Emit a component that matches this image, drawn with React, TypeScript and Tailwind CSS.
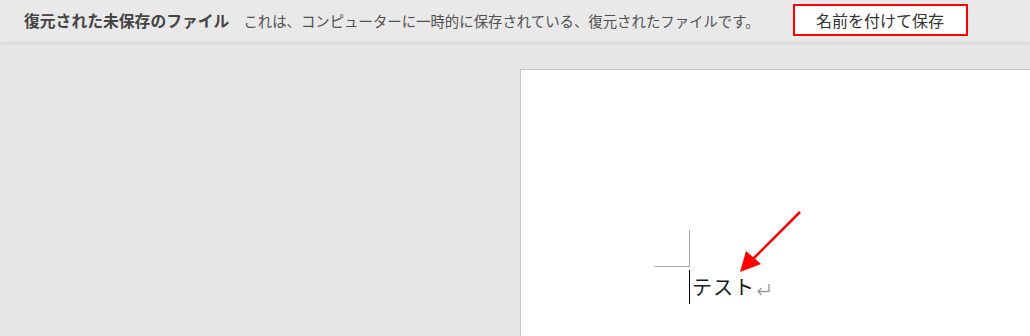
export default function App() {
  return (
    <div
      className="relative w-[1030px] h-[336px] overflow-hidden bg-[#e6e6e6] flex flex-col"
      style={{ fontFamily: '"Noto Sans CJK JP", "Noto Sans", sans-serif' }}
    >
      {/* message bar */}
      <div className="h-[42px] bg-[#e9e9e9] flex items-center shrink-0">
        <span className="ml-[24px] text-[15.8px] font-bold text-[#444444] leading-none">
          復元された未保存のファイル
        </span>
        <span className="ml-[14px] text-[14.4px] text-[#505050] leading-none">
          これは、コンピューターに一時的に保存されている、復元されたファイルです。
        </span>
        <button className="ml-[33px] mt-[-3px] w-[175px] h-[32px] bg-white border-2 border-[#ff0000] text-[16px] text-[#333333] leading-none">
          名前を付けて保存
        </button>
      </div>
      <div className="h-[3px] shrink-0 border-t border-dotted border-[#cfcfcf] bg-[#dedede]" />

      {/* document area */}
      <div className="flex flex-1">
        <div className="ml-[520px] mt-[24px] flex-1 bg-white border-l border-t border-[#c6c6c6]">
          <div className="ml-[133px] mt-[160px] w-[36px] h-[37px] border-r border-b border-[#ababab]" />
          <div className="ml-[168px] mt-[3px] flex items-center h-[34px] border-l border-black pl-[2px]">
            <span
              className="text-[20px] text-[#1a1a1a] tracking-[1px]"
              style={{ fontFamily: '"Noto Sans CJK JP", serif' }}
            >
              テスト
            </span>
            {/* paragraph mark */}
            <svg className="ml-[1px] mt-[4px]" width="15" height="13" viewBox="0 0 15 13">
              <path
                d="M13 1 V8.5 H2 M5.5 5 L2 8.5 L5.5 12"
                fill="none"
                stroke="#9a9a9a"
                strokeWidth="1.4"
              />
            </svg>
          </div>
        </div>
      </div>

      {/* annotation arrow */}
      <svg className="absolute left-0 top-0 pointer-events-none" width="1030" height="336">
        <line x1="800" y1="212" x2="752" y2="260" stroke="#ff0000" strokeWidth="2.5" />
        <polygon points="740,272 746,251 761,264" fill="#ff0000" />
      </svg>
    </div>
  )
}
